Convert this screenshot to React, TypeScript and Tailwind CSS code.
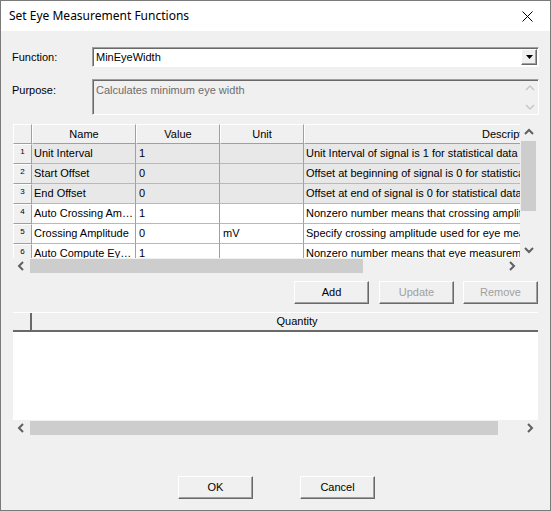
import React from 'react';

const raised =
  'border border-t-white border-l-white border-r-[#696969] border-b-[#696969] shadow-[inset_-1px_-1px_0_#a0a0a0]';
const sunken =
  'border border-t-[#a0a0a0] border-l-[#a0a0a0] border-r-white border-b-white shadow-[inset_1px_1px_0_#696969]';

type Row = { name: string; value: string; unit: string; desc: string; ro: boolean };

const rows: Row[] = [
  { name: 'Unit Interval', value: '1', unit: '', desc: 'Unit Interval of signal is 1 for statistical data', ro: true },
  { name: 'Start Offset', value: '0', unit: '', desc: 'Offset at beginning of signal is 0 for statistical data', ro: true },
  { name: 'End Offset', value: '0', unit: '', desc: 'Offset at end of signal is 0 for statistical data', ro: true },
  { name: 'Auto Crossing Am…', value: '1', unit: '', desc: 'Nonzero number means that crossing amplitude is computed', ro: false },
  { name: 'Crossing Amplitude', value: '0', unit: 'mV', desc: 'Specify crossing amplitude used for eye measurement', ro: false },
  { name: 'Auto Compute Ey…', value: '1', unit: '', desc: 'Nonzero number means that eye measurement is computed', ro: false },
];

const Chevron = ({ dir, color = '#606060', w = 2 }: { dir: 'l' | 'r' | 'u' | 'd'; color?: string; w?: number }) => {
  const pts = {
    l: '6,1 2,5 6,9',
    r: '3,1 7,5 3,9',
    u: '1,6 5,2 9,6',
    d: '1,3 5,7 9,3',
  }[dir];
  return (
    <svg width="10" height="10" viewBox="0 0 10 10">
      <polyline points={pts} fill="none" stroke={color} strokeWidth={w} />
    </svg>
  );
};

const Btn = ({ label, disabled }: { label: string; disabled?: boolean }) => (
  <div
    className={`w-[75px] h-[23px] flex items-center justify-center bg-[#f0f0f0] text-[11px] ${raised} ${
      disabled ? 'text-[#a0a0a0]' : 'text-black'
    }`}
  >
    {label}
  </div>
);

const HScroll = ({ width, thumb }: { width: number; thumb: number }) => (
  <div className="flex h-[15px] bg-[#f0f0f0] items-center" style={{ width }}>
    <div className="w-[17px] h-full flex items-center justify-center shrink-0">
      <Chevron dir="l" />
    </div>
    <div className="h-[14px] bg-[#cdcdcd] shrink-0" style={{ width: thumb }} />
    <div className="flex-1" />
    <div className="w-[17px] h-full flex items-center justify-center shrink-0">
      <Chevron dir="r" />
    </div>
  </div>
);

const App: React.FC = () => {
  return (
    <div className="w-[551px] h-[511px] bg-[#f0f0f0] border border-[#7a7a7a] font-['Liberation_Sans',Arial,sans-serif] text-[11px] text-black overflow-hidden">
      {/* Title bar */}
      <div className="h-[30px] bg-white flex items-center justify-between pl-[8px] pr-[17px]">
        <span className="text-[12px] font-['Noto_Sans',sans-serif] text-black">Set Eye Measurement Functions</span>
        <svg width="11" height="11" viewBox="0 0 11 11">
          <path d="M0.5 0.5 L10.5 10.5 M10.5 0.5 L0.5 10.5" stroke="#000" strokeWidth="1" />
        </svg>
      </div>

      <div className="pt-[16px] pl-[11px]">
        {/* Function */}
        <div className="flex items-center h-[20px]">
          <span className="w-[80px]">Function:</span>
          <div className={`w-[447px] h-[20px] bg-white flex items-center justify-between pl-[3px] pr-[1px] ${sunken}`}>
            <span>MinEyeWidth</span>
            <div className={`w-[16px] h-[16px] bg-[#f0f0f0] flex items-center justify-center ${raised}`}>
              <svg width="7" height="4" viewBox="0 0 7 4">
                <polygon points="0,0 7,0 3.5,4" fill="#000" />
              </svg>
            </div>
          </div>
        </div>

        {/* Purpose */}
        <div className="flex mt-[12px]">
          <span className="w-[80px] pt-[3px]">Purpose:</span>
          <div className={`w-[447px] h-[36px] bg-[#f0f0f0] flex justify-between pl-[3px] pt-[2px] ${sunken}`}>
            <span className="text-[#6d6d6d]">Calculates minimum eye width</span>
            <div className="w-[17px] flex flex-col items-center justify-between pb-[2px] pt-[2px]">
              <Chevron dir="u" color="#c8c8c8" w={1.5} />
              <Chevron dir="d" color="#c8c8c8" w={1.5} />
            </div>
          </div>
        </div>

        {/* Parameters grid */}
        <div className="mt-[9px] w-[525px] pl-[1px]">
          <div className="flex h-[134px]">
            <div className="w-[508px] overflow-hidden bg-white">
              <div className="flex h-[20px] w-[702px] bg-[#f0f0f0]">
                <div className="w-[19px] shrink-0 border-t border-l border-t-white border-l-white border-r border-b border-r-[#a0a0a0] border-b-[#a0a0a0]" />
                {[
                  ['Name', 104],
                  ['Value', 84],
                  ['Unit', 84],
                  ['Description', 411],
                ].map(([t, w]) => (
                  <div
                    key={t as string}
                    className="shrink-0 flex items-center justify-center border-t border-l border-t-white border-l-white border-r border-b border-r-[#a0a0a0] border-b-[#a0a0a0]"
                    style={{ width: w as number }}
                  >
                    {t}
                  </div>
                ))}
              </div>
              {rows.map((r, i) => (
                <div key={i} className={`flex h-[20px] w-[702px] ${r.ro ? 'bg-[#e8e8e8]' : 'bg-white'}`}>
                  <div className="w-[19px] shrink-0 bg-[#f0f0f0] text-[8px] text-center leading-[14px] border-t border-l border-t-white border-l-white border-r border-b border-r-[#a0a0a0] border-b-[#a0a0a0]">
                    {i + 1}
                  </div>
                  <div className="w-[104px] shrink-0 pl-[2px] flex items-center whitespace-nowrap overflow-hidden border-r border-b border-r-[#a0a0a0] border-b-[#b9b9b9]">
                    {r.name}
                  </div>
                  <div className="w-[84px] shrink-0 pl-[3px] flex items-center border-r border-b border-r-[#a0a0a0] border-b-[#b9b9b9]">
                    {r.value}
                  </div>
                  <div className="w-[84px] shrink-0 pl-[3px] flex items-center border-r border-b border-r-[#a0a0a0] border-b-[#b9b9b9]">
                    {r.unit}
                  </div>
                  <div className="w-[411px] shrink-0 pl-[2px] flex items-center whitespace-nowrap overflow-hidden border-r border-b border-r-[#a0a0a0] border-b-[#b9b9b9]">
                    {r.desc}
                  </div>
                </div>
              ))}
            </div>
            <div className="w-[17px] h-full bg-[#f0f0f0] flex flex-col items-center">
              <div className="h-[17px] flex items-center justify-center">
                <Chevron dir="u" />
              </div>
              <div className="w-[15px] h-[70px] bg-[#cdcdcd]" />
              <div className="flex-1" />
              <div className="h-[17px] flex items-center justify-center">
                <Chevron dir="d" />
              </div>
            </div>
          </div>
          <div className="flex">
            <HScroll width={508} thumb={333} />
            <div className="w-[17px] h-[15px] bg-[#f0f0f0]" />
          </div>
        </div>

        {/* Buttons */}
        <div className="flex mt-[8px] pl-[282px] gap-[9px]">
          <Btn label="Add" />
          <div className="ml-[1px]">
            <Btn label="Update" disabled />
          </div>
          <Btn label="Remove" disabled />
        </div>

        {/* Quantity grid */}
        <div className="mt-[8px] w-[525px] ml-[1px]">
          <div className="h-[20px] overflow-hidden flex bg-[#f0f0f0] border-t border-t-white border-b-2 border-b-[#696969]">
            <div className="w-[19px] shrink-0 border-r-2 border-r-[#696969]" />
            <div className="w-[530px] shrink-0 flex items-center justify-center">Quantity</div>
          </div>
          <div className="h-[88px] bg-white" />
          <HScroll width={525} thumb={468} />
        </div>

        {/* OK / Cancel */}
        <div className="flex mt-[41px] pl-[166px] gap-[47px]">
          <Btn label="OK" />
          <Btn label="Cancel" />
        </div>
      </div>
    </div>
  );
};

export default App;
